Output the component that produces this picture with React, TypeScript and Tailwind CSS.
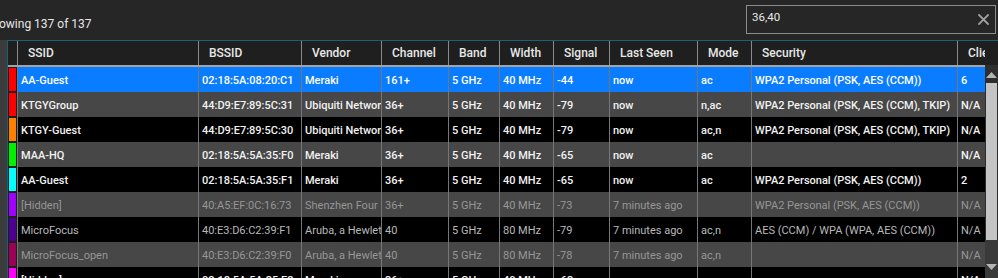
import React from "react";

type Row = {
  c: string;
  v: string[];
  bg: "sel" | "gray" | "black";
  stale?: boolean;
};

const cols = [
  { label: "SSID", w: "w-[181px]" },
  { label: "BSSID", w: "w-[103px]" },
  { label: "Vendor", w: "w-[80px]" },
  { label: "Channel", w: "w-[67px]" },
  { label: "Band", w: "w-[51px]" },
  { label: "Width", w: "w-[54px]" },
  { label: "Signal", w: "w-[56px]" },
  { label: "Last Seen", w: "w-[88px]" },
  { label: "Mode", w: "w-[54px]" },
  { label: "Security", w: "w-[206px]" },
  { label: "Clients", w: "w-[28px]" },
];

const rows: Row[] = [
  { c: "#ff0000", bg: "sel", v: ["AA-Guest", "02:18:5A:08:20:C1", "Meraki", "161+", "5 GHz", "40 MHz", "-44", "now", "ac", "WPA2 Personal (PSK, AES (CCM))", "6"] },
  { c: "#ff0000", bg: "gray", v: ["KTGYGroup", "44:D9:E7:89:5C:31", "Ubiquiti Networks", "36+", "5 GHz", "40 MHz", "-79", "now", "n,ac", "WPA2 Personal (PSK, AES (CCM), TKIP)", "N/A"] },
  { c: "#ff7f00", bg: "black", v: ["KTGY-Guest", "44:D9:E7:89:5C:30", "Ubiquiti Networks", "36+", "5 GHz", "40 MHz", "-79", "now", "ac,n", "WPA2 Personal (PSK, AES (CCM), TKIP)", "N/A"] },
  { c: "#00f000", bg: "gray", v: ["MAA-HQ", "02:18:5A:5A:35:F0", "Meraki", "36+", "5 GHz", "40 MHz", "-65", "now", "ac", "", "N/A"] },
  { c: "#00ffff", bg: "black", v: ["AA-Guest", "02:18:5A:5A:35:F1", "Meraki", "36+", "5 GHz", "40 MHz", "-65", "now", "ac", "WPA2 Personal (PSK, AES (CCM))", "2"] },
  { c: "#a000ff", bg: "gray", stale: true, v: ["[Hidden]", "40:A5:EF:0C:16:73", "Shenzhen Four Seas", "36+", "5 GHz", "40 MHz", "-73", "7 minutes ago", "", "WPA2 Personal (PSK, AES (CCM))", "N/A"] },
  { c: "#4b0091", bg: "black", stale: true, v: ["MicroFocus", "40:E3:D6:C2:39:F1", "Aruba, a Hewlett Packard", "40", "5 GHz", "80 MHz", "-79", "7 minutes ago", "ac,n", "AES (CCM) / WPA (WPA, AES (CCM))", "N/A"] },
  { c: "#9a0058", bg: "gray", stale: true, v: ["MicroFocus_open", "40:E3:D6:C2:39:F0", "Aruba, a Hewlett Packard", "40", "5 GHz", "80 MHz", "-78", "7 minutes ago", "ac,n", "", "N/A"] },
  { c: "#ff00ff", bg: "black", v: ["[Hidden]", "02:18:5A:5A:35:F2", "Meraki", "36+", "5 GHz", "40 MHz", "-63", "now", "", "", "N/A"] },
];

function rowClasses(r: Row) {
  if (r.bg === "sel") return "bg-[#0a7cff] text-white font-medium";
  if (r.bg === "gray") return r.stale ? "bg-[#474747] text-[#969696]" : "bg-[#474747] text-[#f2f2f2] font-medium";
  return r.stale ? "bg-black text-[#b9b9b9]" : "bg-black text-[#f2f2f2] font-medium";
}

export default function App() {
  return (
    <div
      className="w-[998px] h-[278px] overflow-hidden bg-[#262626] text-white flex flex-col"
      style={{ fontFamily: 'Roboto, "Noto Sans", sans-serif' }}
    >
      {/* top bar */}
      <div className="h-[40px] shrink-0 flex items-start">
        <div className="flex-1 h-full flex items-center pt-[8px] text-[12px] text-[#e6e6e6] overflow-hidden whitespace-nowrap">
          <span className="-ml-px">owing 137 of 137</span>
        </div>
        <div className="mt-[5px] mr-[2px] w-[250px] h-[29px] border border-[#8c8c8c] flex items-center pl-[5px] pr-[6px]">
          <span className="flex-1 text-[11.5px] text-[#e8e8e8] -mt-[3px]">36,40</span>
          <svg width="11" height="11" viewBox="0 0 11 11" className="shrink-0">
            <path d="M1 1 L10 10 M10 1 L1 10" stroke="#a0a0a0" strokeWidth="1.8" strokeLinecap="square" />
          </svg>
        </div>
      </div>

      {/* table area */}
      <div className="flex-1 flex min-h-0">
        <div className="w-[7px] shrink-0 bg-[#3c3c3c]" />
        <div className="flex-1 flex flex-col min-w-0 border-t border-l border-[#1d6079]">
          {/* header */}
          <div className="h-[24px] shrink-0 flex bg-[#1f1f1f] text-[12px] text-[#e8e8e8] font-medium">
            <div className="w-[9px] shrink-0" />
            {cols.map((c) => (
              <div
                key={c.label}
                className={`${c.w} shrink-0 border-l border-[#8a8a8a] pl-[10px] flex items-center overflow-hidden whitespace-nowrap`}
              >
                {c.label}
              </div>
            ))}
          </div>
          {/* body */}
          <div className="flex-1 flex min-h-0">
            <div className="w-[977px] shrink-0 flex flex-col">
              <div className="h-[2px] shrink-0 bg-[#a3a3a3]" />
              {rows.map((r, i) => (
                <div key={i} className={`h-[25px] shrink-0 flex text-[11px] ${rowClasses(r)}`}>
                  <div className="w-[9px] shrink-0 bg-[#1e1e1e] flex items-stretch py-px pl-px pr-px">
                    <div className="flex-1" style={{ backgroundColor: r.c }} />
                  </div>
                  {cols.map((c, j) => (
                    <div
                      key={j}
                      className={`${c.w} shrink-0 border-l border-[#767676] pl-[3px] pt-[4px] flex items-center overflow-hidden whitespace-nowrap`}
                    >
                      {r.v[j]}
                    </div>
                  ))}
                </div>
              ))}
            </div>
            {/* scrollbar */}
            <div className="w-[13px] shrink-0 bg-[#2e2e2e] flex flex-col">
              <div className="h-[2px] shrink-0" />
              <div className="h-[16px] shrink-0 flex items-center justify-center">
                <svg width="11" height="6" viewBox="0 0 11 6">
                  <path d="M0 6 L5.5 0 L11 6 Z" fill="#b5b5b5" />
                </svg>
              </div>
              <div className="h-[157px] shrink-0 mx-px bg-[#c4c4c4]" />
              <div className="flex-1 bg-[#3a3a3a] flex items-end justify-center pb-[8px]">
                <svg width="11" height="6" viewBox="0 0 11 6">
                  <path d="M0 0 L11 0 L5.5 6 Z" fill="#b5b5b5" />
                </svg>
              </div>
            </div>
          </div>
        </div>
      </div>
    </div>
  );
}
